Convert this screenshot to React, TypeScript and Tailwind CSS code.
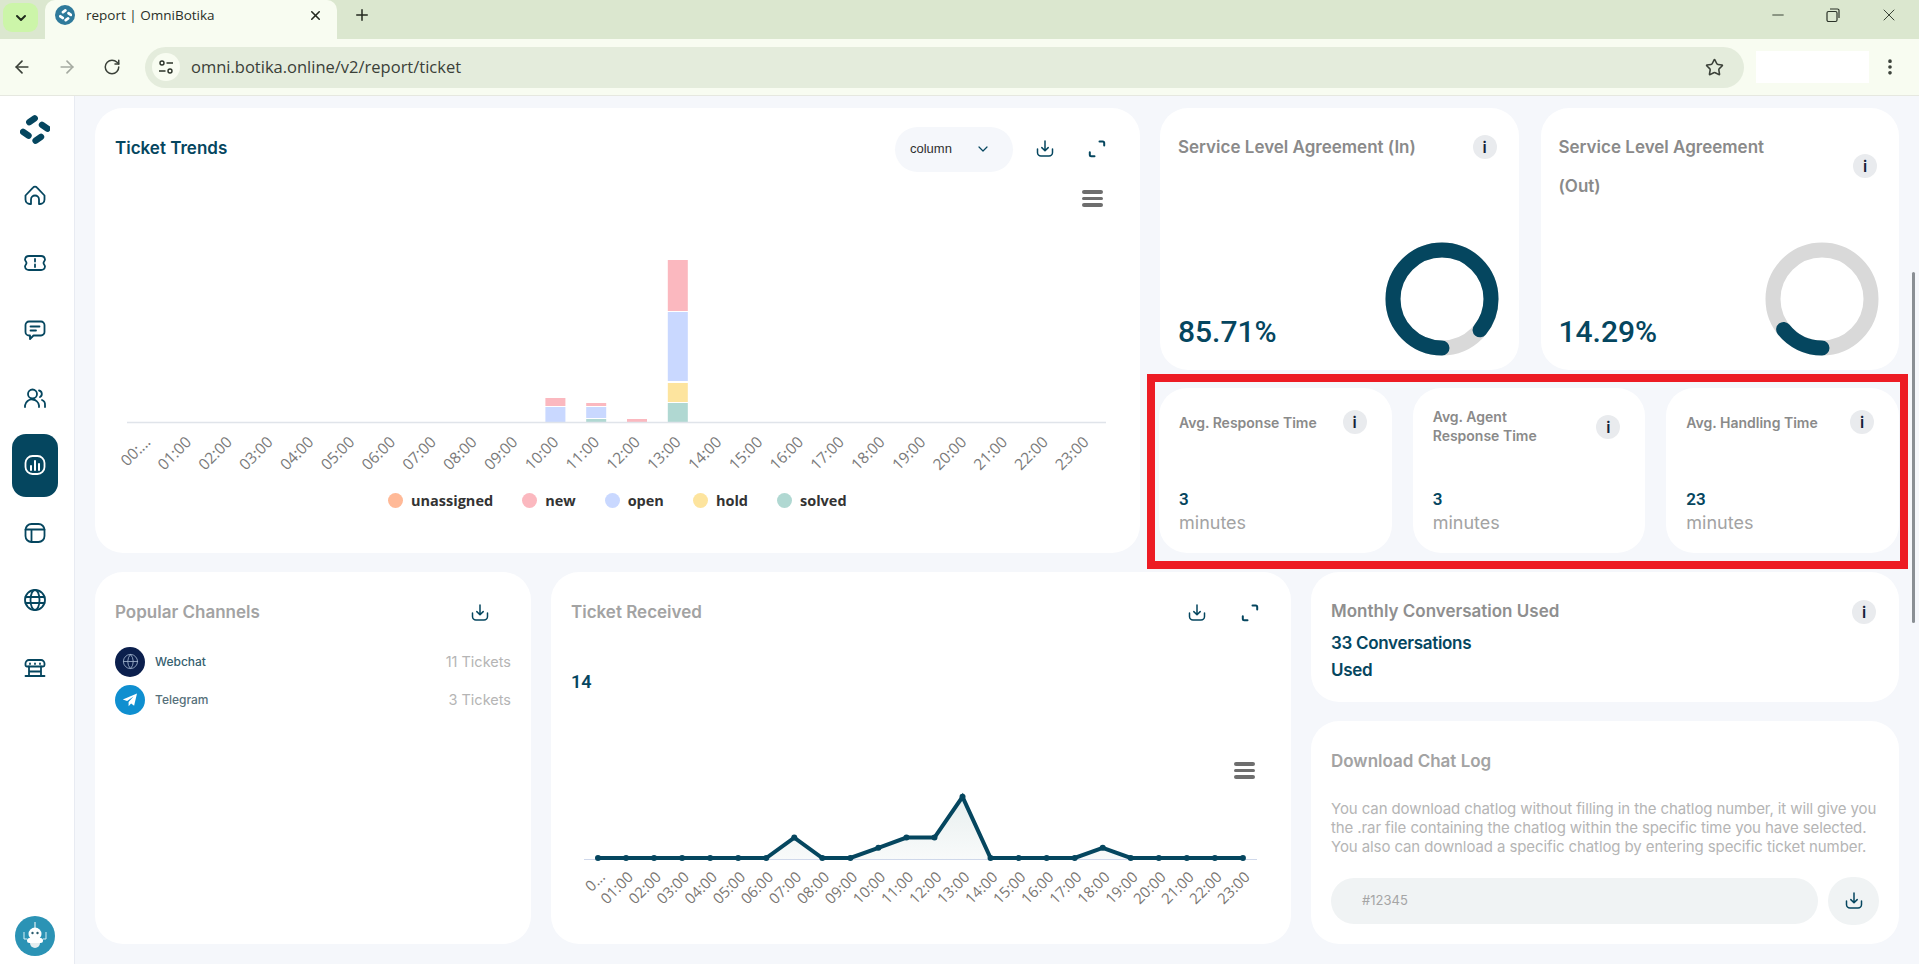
import type { ReactNode } from "react"
import { ChevronDown, X, Plus, ArrowLeft, ArrowRight, RotateCw, Star, Minus, EllipsisVertical, Globe } from "lucide-react"

const teal = "#05465f"

const barColors = { new: "#fbb8bf", open: "#c9d8ff", hold: "#fde49e", solved: "#b0d8d2" }

// [index, top, bottom, colour]
const bars: [number, number, number, string][] = [
  [10, 398, 406, barColors.new],
  [10, 407, 422, barColors.open],
  [11, 403, 406, barColors.new],
  [11, 407, 418, barColors.open],
  [11, 419, 422, barColors.solved],
  [12, 419, 422, barColors.new],
  [13, 260, 311, barColors.new],
  [13, 312, 381, barColors.open],
  [13, 383, 402, barColors.hold],
  [13, 403, 422, barColors.solved],
]

const legend = [
  { label: "unassigned", color: "#ffb997" },
  { label: "new", color: barColors.new },
  { label: "open", color: barColors.open },
  { label: "hold", color: barColors.hold },
  { label: "solved", color: barColors.solved },
]

const hours = Array.from({ length: 24 }, (_, i) => `${String(i).padStart(2, "0")}:00`)

const received = [0, 0, 0, 0, 0, 0, 0, 2, 0, 0, 1, 2, 2, 6, 0, 0, 0, 0, 1, 0, 0, 0, 0, 0]

function DownloadIcon({ size = 20 }: { size?: number }) {
  return (
    <svg width={size} height={size} viewBox="0 0 20 20" fill="none" stroke={teal} strokeWidth="1.5" strokeLinecap="round" strokeLinejoin="round">
      <path d="M10 2v9.5M6.8 8.6 10 11.8l3.2-3.2" />
      <path d="M2.5 10v3.5a3.5 3.5 0 0 0 3.5 3.5h8a3.5 3.5 0 0 0 3.5-3.5V10" />
    </svg>
  )
}

function ExpandIcon() {
  return (
    <svg width="20" height="20" viewBox="0 0 20 20" fill="none" stroke={teal} strokeWidth="2" strokeLinecap="round" strokeLinejoin="round">
      <path d="M12.5 2.5h3.2a1.5 1.5 0 0 1 1.5 1.5v2.5" />
      <path d="M7.5 17.2H4.3a1.5 1.5 0 0 1-1.5-1.5v-2.5" />
    </svg>
  )
}

function ChartMenu() {
  return (
    <div className="flex w-[21px] flex-col gap-[3px]">
      <div className="h-[3.5px] rounded-full bg-[#6e6e6e]" />
      <div className="h-[3.5px] rounded-full bg-[#6e6e6e]" />
      <div className="h-[3.5px] rounded-full bg-[#6e6e6e]" />
    </div>
  )
}

function Info() {
  return (
    <div className="flex h-[24px] w-[24px] shrink-0 items-center justify-center rounded-full bg-[#e9ebee] text-[16px] font-semibold leading-none text-[#14233a]">
      i
    </div>
  )
}

function Donut({ percent }: { percent: number }) {
  const r = 49
  const len = 2 * Math.PI * r
  return (
    <svg width="114" height="114" viewBox="0 0 114 114" fill="none" strokeWidth="15">
      <circle cx="57" cy="57" r={r} stroke="#d9d9d9" />
      <circle
        cx="57"
        cy="57"
        r={r}
        stroke={teal}
        strokeLinecap="round"
        strokeDasharray={`${(len * percent) / 100} ${len}`}
        transform="rotate(90 57 57)"
      />
    </svg>
  )
}

function SlaCard({ title, value, percent, infoClass }: { title: ReactNode; value: string; percent: number; infoClass: string }) {
  return (
    <div className="relative flex h-full flex-1 flex-col justify-between rounded-[28px] bg-white pb-[23px] pl-[18px] pr-[22px] pt-[27px]">
      <div className="flex justify-between">
        <div className="-mt-[7px] text-[17px] font-semibold leading-[39px] text-[#8a8a8a]">{title}</div>
        <div className={infoClass}>
          <Info />
        </div>
      </div>
      <div className="flex items-end justify-between">
        <div className="text-[30px] leading-none text-[#05465f]" style={{ fontFamily: "Roboto, sans-serif", fontWeight: 500 }}>
          {value}
        </div>
        <div className="-mb-[9px] -mr-[2px]">
          <Donut percent={percent} />
        </div>
      </div>
    </div>
  )
}

function TimeCard({ title, value, infoClass }: { title: ReactNode; value: string; infoClass: string }) {
  return (
    <div className="flex h-full flex-1 flex-col justify-between rounded-[28px] bg-white pb-[18px] pl-[20px] pr-[25px] pt-[25px]">
      <div className="flex items-start justify-between">
        <div className="min-h-[24px] text-[14px] font-semibold leading-[19px] text-[#8a8a8a]">{title}</div>
        <div className={infoClass}>
          <Info />
        </div>
      </div>
      <div>
        <div className="text-[17px] font-semibold leading-[24px] text-[#05465f]" style={{ fontFamily: "Roboto, sans-serif" }}>
          {value}
        </div>
        <div className="text-[18px] leading-[24px] text-[#a3a3a3]">minutes</div>
      </div>
    </div>
  )
}

function TicketTrendsChart() {
  const x = (i: number) => 32 + (i + 0.5) * 40.8
  return (
    <svg width="1045" height="300" viewBox="0 0 1045 300" className="block">
      {bars.map(([i, top, bottom, color], n) => (
        <rect key={n} x={x(i) - 10} y={top - 190} width="20" height={bottom - top} fill={color} />
      ))}
      <line x1="32" x2="1011" y1="232.5" y2="232.5" stroke="#e0e4ea" strokeWidth="1.5" />
      {hours.map((h, i) => (
        <text
          key={h}
          transform={`translate(${x(i) + 4} 253) rotate(-45)`}
          textAnchor="end"
          fontSize="15.5"
          fill="#7a7a7a"
          fontFamily="'Open Sans', sans-serif"
        >
          {i === 0 ? "00:..." : h}
        </text>
      ))}
    </svg>
  )
}

function TicketReceivedChart() {
  const x = (i: number) => 47 + i * 28.04
  const y = (v: number) => 98 - v * 10.2
  const line = received.map((v, i) => `${x(i)},${y(v)}`).join(" ")
  return (
    <svg width="740" height="150" viewBox="0 0 740 150" className="block">
      <defs>
        <linearGradient id="recv" x1="0" x2="0" y1="0" y2="1">
          <stop offset="0" stopColor="#e8efef" />
          <stop offset="1" stopColor="#f8fafa" />
        </linearGradient>
      </defs>
      <polygon points={`${x(0)},99 ${line} ${x(23)},99`} fill="url(#recv)" />
      <line x1="33" x2="706" y1="99.5" y2="99.5" stroke="#cfd8ea" strokeWidth="1" />
      <polyline points={line} fill="none" stroke={teal} strokeWidth="4" strokeLinejoin="miter" />
      {received.map((v, i) => (
        <circle key={i} cx={x(i)} cy={y(v)} r="3" fill={teal} />
      ))}
      {hours.map((h, i) => (
        <text
          key={h}
          transform={`translate(${x(i) + 8} 118) rotate(-45)`}
          textAnchor="end"
          fontSize="15"
          fill="#7a7672"
          fontFamily="'Open Sans', sans-serif"
        >
          {i === 0 ? "0..." : h}
        </text>
      ))}
    </svg>
  )
}

function Logo({ size = 30, color = teal }: { size?: number; color?: string }) {
  return (
    <svg width={size} height={size} viewBox="0 0 30 30" fill={color}>
      <rect x="5.500" y="2.100" width="13" height="6.400" rx="3.200" transform="rotate(-35 12 5.300)" />
      <rect x="18.200" y="8.500" width="13" height="6.400" rx="3.200" transform="rotate(35 24.700 11.700)" />
      <rect x="-0.700" y="15.500" width="13" height="6.400" rx="3.200" transform="rotate(35 5.800 18.700)" />
      <rect x="11.800" y="20.500" width="13" height="6.400" rx="3.200" transform="rotate(-35 18.300 23.700)" />
    </svg>
  )
}

function NavIcon({ children }: { children: ReactNode }) {
  return (
    <svg width="24" height="24" viewBox="0 0 24 24" fill="none" stroke={teal} strokeWidth="1.8" strokeLinecap="round" strokeLinejoin="round">
      {children}
    </svg>
  )
}

const navIcons = [
  <path key="home" d="M2.500 12.500 10 4.600a2.700 2.700 0 0 1 4 0l7.500 7.900v4a4.500 4.500 0 0 1-4.500 4.500h-1v-4.500a4 4 0 0 0-8 0V21H7a4.500 4.500 0 0 1-4.500-4.500Z" />,
  <g key="ticket">
    <path d="M6 5h12a4 4 0 0 1 4 3.500c0 1.500-1.500 2-1.500 3.500s1.500 2 1.500 3.500a4 4 0 0 1-4 3.500H6a4 4 0 0 1-4-3.500c0-1.500 1.500-2 1.500-3.500S2 10 2 8.500A4 4 0 0 1 6 5Z" />
    <path d="M12 8v2.500M12 13.500V16" />
  </g>,
  <g key="chat">
    <path d="M6 3.500h12a3.500 3.500 0 0 1 3.500 3.500v7a3.500 3.500 0 0 1-3.500 3.500h-7.500L7 21v-3.500H6A3.500 3.500 0 0 1 2.500 14V7A3.500 3.500 0 0 1 6 3.500Z" />
    <path d="M7.500 8.500h9M7.500 12.500h5.500" />
  </g>,
  <g key="users">
    <circle cx="9.500" cy="8" r="4.500" />
    <path d="M2 21v-1.500a7 7 0 0 1 7.500-6 7 7 0 0 1 6.500 6V21" />
    <path d="M16 4.500a3.500 3.500 0 0 1 1 6.500M19 14a5 5 0 0 1 3 5v2" />
  </g>,
  null,
  <g key="layout">
    <rect x="2.500" y="3" width="19" height="18" rx="6" />
    <path d="M2.500 8.500h19M8.500 8.500V21" />
  </g>,
  <g key="globe">
    <circle cx="12" cy="12" r="10" />
    <ellipse cx="12" cy="12" rx="4.500" ry="10" />
    <path d="M2.500 9h19M2.500 15h19" />
  </g>,
  <g key="store">
    <path d="M6 4h12a3.500 3.500 0 0 1 3.500 3.500V9a1.500 1.500 0 0 1-1.500 1.500H4A1.500 1.500 0 0 1 2.500 9V7.500A3.500 3.500 0 0 1 6 4Z" />
    <path d="M7 7.500v.5M12 7.500v.5M17 7.500v.5" />
    <path d="M6 10.500V19.500M18 10.500V19.500M2.500 20h19M6 15.500h12" />
  </g>,
]

function BrowserChrome() {
  return (
    <header className="h-[96px] shrink-0" style={{ fontFamily: "'Open Sans', sans-serif" }}>
      <div className="flex h-[39px] items-start bg-[#dbe7cf]">
        <div className="ml-[3px] mt-[3px] flex h-[29px] w-[35px] items-center justify-center rounded-[9px] bg-[#ccf5a9]">
          <ChevronDown size={16} strokeWidth={3} color="#1f2a1c" />
        </div>
        <div className="ml-[7px] flex h-[39px] w-[292px] items-center rounded-t-[10px] bg-[#f8fcf1] pb-[9px] pl-[10px] pr-[14px]">
          <div className="flex h-[20px] w-[20px] items-center justify-center rounded-full bg-[#2f7a9b]">
            <Logo size={13} color="#ffffff" />
          </div>
          <span className="ml-[11px] flex-1 text-[13.500px] text-[#2a2f28]">report | OmniBotika</span>
          <X size={15} strokeWidth={2.5} color="#23291f" />
        </div>
        <div className="ml-[16px] mt-[6px]">
          <Plus size={18} strokeWidth={2} color="#23291f" />
        </div>
        <div className="ml-auto mt-[5px] flex items-center gap-[38px] pr-[20px]">
          <Minus size={18} strokeWidth={1.2} color="#2b3329" />
          <svg width="16" height="16" viewBox="0 0 16 16" fill="none" stroke="#2b3329" strokeWidth="1.2">
            <rect x="2" y="4.500" width="10" height="10" rx="1.500" />
            <path d="M5 2h7.500A1.500 1.500 0 0 1 14 3.500V11" />
          </svg>
          <X size={20} strokeWidth={1.1} color="#2b3329" />
        </div>
      </div>
      <div className="flex h-[57px] items-center border-b border-[#e6e8e0] bg-[#f8fcf1]">
        <div className="ml-[12px]">
          <ArrowLeft size={20} strokeWidth={2} color="#3b4139" />
        </div>
        <div className="ml-[25px]">
          <ArrowRight size={20} strokeWidth={2} color="#a5aaa1" />
        </div>
        <div className="ml-[26px]">
          <RotateCw size={18} strokeWidth={2} color="#3b4139" />
        </div>
        <div className="ml-[24px] flex h-[41px] w-[1599px] items-center rounded-full bg-[#e4ecdc] pl-[7px] pr-[20px]">
          <div className="flex h-[28px] w-[28px] items-center justify-center rounded-full bg-[#f8fcf1]">
            <svg width="16" height="16" viewBox="0 0 16 16" fill="none" stroke="#2b3329" strokeWidth="1.4">
              <circle cx="4" cy="4" r="2" />
              <path d="M8.500 4H15M1 12h6.500" />
              <circle cx="12" cy="12" r="2" />
            </svg>
          </div>
          <span className="ml-[11px] flex-1 text-[16.500px] text-[#3a4038]">omni.botika.online/v2/report/ticket</span>
          <Star size={19} strokeWidth={2} color="#3b4139" />
        </div>
        <div className="ml-[12px] h-[32px] w-[113px] bg-white" />
        <div className="ml-[11px]">
          <EllipsisVertical size={20} strokeWidth={2.4} color="#3b4139" />
        </div>
      </div>
    </header>
  )
}

function Sidebar() {
  return (
    <aside className="relative flex w-[75px] shrink-0 flex-col items-center border-r border-[#e8ebf2] bg-white pr-[5px] pt-[19px]">
      <Logo />
      <div className="mt-[19px] flex flex-col items-center gap-[5px]">
        {navIcons.map((icon, i) =>
          icon ? (
            <div key={i} className="flex h-[62.500px] w-[46px] items-center justify-center">
              <NavIcon>{icon}</NavIcon>
            </div>
          ) : (
            <div key={i} className="flex h-[62.500px] w-[46px] items-center justify-center rounded-[14px] bg-[#05465f]">
              <svg width="24" height="24" viewBox="0 0 24 24" fill="none" stroke="#fff" strokeWidth="1.8" strokeLinecap="round">
                <rect x="2.500" y="3" width="19" height="18" rx="7" />
                <path d="M8 17v-4M12 17V8M16 17v-6" strokeWidth="2" />
              </svg>
            </div>
          ),
        )}
      </div>
      <div className="mb-[8px] mt-auto flex h-[40px] w-[40px] items-center justify-center rounded-full bg-[#2b93b5]">
        <svg width="32" height="32" viewBox="0 0 32 32" fill="none">
          <path d="M16 2v6" stroke="#fff" strokeWidth="1" />
          <path d="M5 12v7h3M27 12v7h-3" stroke="#d8f0f6" strokeWidth="1" />
          <circle cx="16" cy="14" r="6.500" fill="#fff" />
          <rect x="8" y="18" width="16" height="5" rx="2.500" fill="#fff" />
          <path d="M11 23h10a5 5 0 0 1-10 0Z" fill="#e6eef0" />
          <circle cx="13.500" cy="13" r="1.200" fill="#2b5c6e" />
          <circle cx="18.500" cy="13" r="1.200" fill="#2b5c6e" />
        </svg>
      </div>
    </aside>
  )
}

export default function App() {
  return (
    <div className="relative flex h-[964px] w-full flex-col overflow-hidden bg-[#f5f7fb]" style={{ fontFamily: "Inter, sans-serif" }}>
      <BrowserChrome />
      <div className="flex flex-1">
        <Sidebar />
        <main className="flex flex-1 flex-col gap-[19px] pl-[20px] pt-[12px]">
          {/* Top row */}
          <div className="flex h-[445px] gap-[20px]">
            <section className="relative w-[1045px] rounded-[28px] bg-white">
              <div className="flex h-[82px] items-center pl-[20px]">
                <h2 className="w-[112px] whitespace-nowrap text-[17px] font-semibold text-[#05465f]">Ticket Trends</h2>
                <div className="ml-[668px] flex h-[45px] w-[118px] items-center rounded-full bg-[#f5f7fb] pl-[15px] pr-[22px]" style={{ fontFamily: "'Liberation Sans', sans-serif" }}>
                  <span className="flex-1 text-[13px] text-[#2f2f2f]">column</span>
                  <ChevronDown size={16} strokeWidth={1.8} color={teal} />
                </div>
                <div className="ml-[22px]">
                  <DownloadIcon />
                </div>
                <div className="ml-[32px]">
                  <ExpandIcon />
                </div>
              </div>
              <div className="absolute right-[37px] top-[82px]">
                <ChartMenu />
              </div>
              <TicketTrendsChart />
              <div className="absolute left-[293px] top-[382px] flex items-center text-[14.500px] font-bold text-[#333]" style={{ fontFamily: "'Open Sans', sans-serif" }}>
                {legend.map((l) => (
                  <div key={l.label} className="mr-[29px] flex items-center gap-[8px]">
                    <span className="h-[15px] w-[15px] rounded-full" style={{ backgroundColor: l.color }} />
                    {l.label}
                  </div>
                ))}
              </div>
            </section>

            <div className="flex w-[741px] flex-col gap-[18px]">
              <div className="flex h-[262px] gap-[22px] pr-[2px]">
                <SlaCard title="Service Level Agreement (In)" value="85.71%" percent={85.71} infoClass="" />
                <SlaCard
                  title={
                    <>
                      Service Level Agreement
                      <br />
                      (Out)
                    </>
                  }
                  value="14.29%"
                  percent={14.29}
                  infoClass="mt-[19px]"
                />
              </div>
              <div className="relative -ml-[1px] flex h-[165px] w-[740px] gap-[21px]">
                <TimeCard title="Avg. Response Time" value="3" infoClass="-mt-[3px]" />
                <TimeCard
                  title={
                    <div className="-mt-[6px]">
                      Avg. Agent
                      <br />
                      Response Time
                    </div>
                  }
                  value="3"
                  infoClass="mt-[2px]"
                />
                <TimeCard title="Avg. Handling Time" value="23" infoClass="-mt-[3px]" />
                {/* Red annotation box */}
                <div className="pointer-events-none absolute -bottom-[16px] -left-[12px] -right-[9px] -top-[14px] border-[8px] border-[#ed1c24]" />
              </div>
            </div>
          </div>

          {/* Bottom row */}
          <div className="flex h-[372px] gap-[20px]">
            <section className="w-[436px] rounded-[28px] bg-white px-[20px] pt-[28px]">
              <div className="flex items-center justify-between pr-[21px]">
                <h2 className="text-[17px] font-semibold text-[#a3a3a3]">Popular Channels</h2>
                <DownloadIcon />
              </div>
              <div className="mt-[21px] flex flex-col gap-[8px]">
                <div className="flex h-[30px] items-center">
                  <div className="flex h-[30px] w-[30px] items-center justify-center rounded-full bg-[#0b1f4d]">
                    <Globe size={17} strokeWidth={1.2} color="#9fb2cc" />
                  </div>
                  <span className="ml-[10px] flex-1 text-[12px] font-medium text-[#35606f]">Webchat</span>
                  <span className="text-[14.500px] text-[#b5b5b5]">11 Tickets</span>
                </div>
                <div className="flex h-[30px] items-center">
                  <div className="flex h-[30px] w-[30px] items-center justify-center rounded-full bg-[#0f8fd0]">
                    <svg width="16" height="16" viewBox="0 0 16 16" fill="#fff">
                      <path d="M15 1.500 0.800 7.500l4.300 1.600L11.500 4.500 6.600 10v4.200l2.500-2.700 3 2.200Z" />
                    </svg>
                  </div>
                  <span className="ml-[10px] flex-1 text-[12px] font-medium text-[#56707a]">Telegram</span>
                  <span className="text-[14.500px] text-[#b5b5b5]">3 Tickets</span>
                </div>
              </div>
            </section>

            <section className="relative w-[740px] rounded-[28px] bg-white">
              <div className="flex items-center pl-[20px] pr-[31px] pt-[28px]">
                <h2 className="flex-1 text-[17px] font-semibold text-[#a3a3a3]">Ticket Received</h2>
                <DownloadIcon />
                <div className="ml-[33px]">
                  <ExpandIcon />
                </div>
              </div>
              <div className="mt-[44px] pl-[20px] text-[18px] font-semibold leading-[24px] text-[#05465f]" style={{ fontFamily: "Roboto, sans-serif" }}>
                14
              </div>
              <div className="absolute right-[36px] top-[190px]">
                <ChartMenu />
              </div>
              <div className="absolute bottom-[34px] left-0">
                <TicketReceivedChart />
              </div>
            </section>

            <div className="flex w-[588px] flex-col gap-[19px]">
              <section className="h-[130px] rounded-[28px] bg-white pl-[20px] pr-[23px] pt-[27px]">
                <div className="flex items-center justify-between">
                  <h2 className="text-[17px] font-semibold text-[#8f8f8f]">Monthly Conversation Used</h2>
                  <Info />
                </div>
                <div className="mt-[5px] text-[17px] font-semibold leading-[27px] tracking-[-0.3px] text-[#05465f]">
                  33 Conversations
                  <br />
                  Used
                </div>
              </section>
              <section className="flex-1 rounded-[28px] bg-white px-[20px] pt-[28px]">
                <h2 className="text-[17px] font-semibold text-[#a3a3a3]">Download Chat Log</h2>
                <p className="mt-[24px] whitespace-nowrap text-[15px] leading-[19px] tracking-[-0.1px] text-[#b5b5b5]">
                  You can download chatlog without filling in the chatlog number, it will give you
                  <br />
                  the .rar file containing the chatlog within the specific time you have selected.
                  <br />
                  You also can download a specific chatlog by entering specific ticket number.
                </p>
                <div className="mt-[21px] flex items-center">
                  <div className="flex h-[46px] w-[487px] items-center rounded-full bg-[#f0f3f4] pl-[31px] text-[13px] text-[#a5a5a5]">#12345</div>
                  <div className="ml-[10px] flex h-[48px] w-[51px] items-center justify-center rounded-full bg-[#f0f3f4]">
                    <DownloadIcon />
                  </div>
                </div>
              </section>
            </div>
          </div>
        </main>
      </div>
      {/* Page scrollbar thumb */}
      <div className="absolute right-[4px] top-[272px] h-[351px] w-[3px] rounded-full bg-[#8a8f94]" />
    </div>
  )
}
